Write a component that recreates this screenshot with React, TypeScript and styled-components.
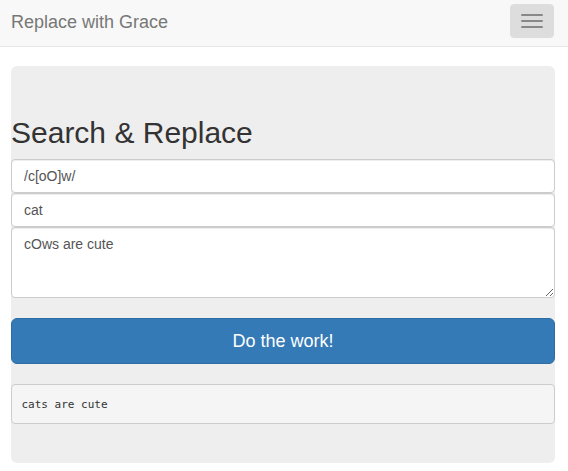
import React from "react";
import styled, { createGlobalStyle } from "styled-components";

const GlobalStyle = createGlobalStyle`
  *, *::before, *::after { box-sizing: border-box; }
  html, body { margin: 0; padding: 0; background: #fff; }
  body {
    font-family: "Liberation Sans", Arial, Helvetica, sans-serif;
    font-size: 14px;
    line-height: 1.42857;
    color: #333;
  }
`;

const Navbar = styled.nav`
  height: 47px;
  background: #f8f8f8;
  border-bottom: 1px solid #e7e7e7;
  display: flex;
  align-items: flex-start;
  justify-content: space-between;
`;

const Brand = styled.a`
  padding: 12px 11px;
  font-size: 18px;
  line-height: 20px;
  color: #777;
  text-decoration: none;
`;

const Toggle = styled.button`
  margin: 4px 14px 0 0;
  width: 44px;
  height: 34px;
  padding: 9px 10px;
  background: #ddd;
  border: 1px solid #ddd;
  border-radius: 4px;
  display: flex;
  flex-direction: column;
  gap: 4px;
  cursor: pointer;
`;

const IconBar = styled.span`
  display: block;
  width: 22px;
  height: 2px;
  border-radius: 1px;
  background: #888;
`;

const Page = styled.main`
  padding: 19px 13px 8px 11px;
`;

const Panel = styled.section`
  background: #eee;
  border-radius: 6px;
  padding: 30px 0 39px;
  display: flex;
  flex-direction: column;
`;

const Title = styled.h2`
  margin: 20px 0 10px;
  font-size: 30px;
  line-height: 33px;
  font-weight: 500;
  color: #333;
`;

const Field = styled.input`
  display: block;
  width: 100%;
  height: 34px;
  padding: 6px 12px;
  font-family: inherit;
  font-size: 14px;
  line-height: 20px;
  color: #555;
  background: #fff;
  border: 1px solid #ccc;
  border-radius: 4px;
  box-shadow: inset 0 1px 1px rgba(0, 0, 0, 0.075);
  outline: none;
`;

const Area = styled.textarea`
  display: block;
  width: 100%;
  height: 71px;
  padding: 6px 12px;
  font-family: inherit;
  font-size: 14px;
  line-height: 20px;
  color: #555;
  background: #fff;
  border: 1px solid #ccc;
  border-radius: 4px;
  box-shadow: inset 0 1px 1px rgba(0, 0, 0, 0.075);
  outline: none;
  resize: vertical;
  margin: 0;
`;

const Action = styled.button`
  margin-top: 20px;
  height: 46px;
  width: 100%;
  padding: 10px 16px;
  font-family: inherit;
  font-size: 18px;
  line-height: 24px;
  color: #fff;
  background: #337ab7;
  border: 1px solid #2e6da4;
  border-radius: 6px;
  cursor: pointer;
`;

const Output = styled.pre`
  margin: 20px 0 0;
  padding: 9.5px;
  height: 40px;
  font-family: "DejaVu Sans Mono", Consolas, monospace;
  font-size: 11px;
  line-height: 19px;
  color: #333;
  background: #f5f5f5;
  border: 1px solid #ccc;
  border-radius: 4px;
`;

export default function App() {
  return (
    <>
      <GlobalStyle />
      <Navbar>
        <Brand href="#">Replace with Grace</Brand>
        <Toggle aria-label="Toggle navigation">
          <IconBar />
          <IconBar />
          <IconBar />
        </Toggle>
      </Navbar>
      <Page>
        <Panel>
          <Title>Search &amp; Replace</Title>
          <Field defaultValue="/c[oO]w/" />
          <Field defaultValue="cat" />
          <Area defaultValue="cOws are cute" />
          <Action>Do the work!</Action>
          <Output>cats are cute</Output>
        </Panel>
      </Page>
    </>
  );
}
